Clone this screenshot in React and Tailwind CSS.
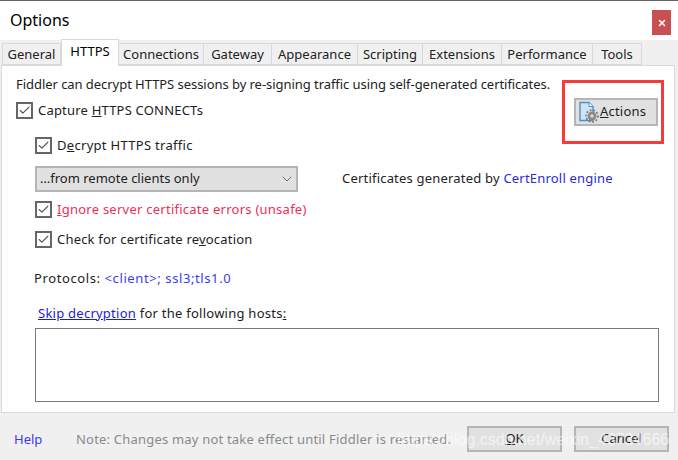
import { Check, ChevronDown, X } from "lucide-react";

const TABS = [
  { label: "General", width: "w-[59px]" },
  { label: "HTTPS", width: "w-[58px]", active: true },
  { label: "Connections", width: "w-[86px]" },
  { label: "Gateway", width: "w-[69px]" },
  { label: "Appearance", width: "w-[87px]" },
  { label: "Scripting", width: "w-[66px]" },
  { label: "Extensions", width: "w-[80px]" },
  { label: "Performance", width: "w-[92px]" },
  { label: "Tools", width: "w-[50px]" },
];

function CheckRow({ className = "", labelClass = "", children }) {
  return (
    <div className={`flex items-center gap-[5px] ${className}`}>
      <span className="flex h-[17px] w-[17px] shrink-0 items-center justify-center border-2 border-[#666] bg-white">
        <Check className="h-[15px] w-[15px] text-[#555]" strokeWidth={2} />
      </span>
      <span className={`-mt-[2px] ${labelClass}`}>{children}</span>
    </div>
  );
}

function ActionsIcon() {
  return (
    <svg width="22" height="22" viewBox="0 0 22 22" className="shrink-0">
      <path d="M2 1.5h9l4 4v14H2z" fill="#cfe3f5" stroke="#4a90c8" strokeWidth="1.4" />
      <path d="M11 1.5v4h4" fill="#fff" stroke="#4a90c8" strokeWidth="1" />
      <circle cx="14" cy="15" r="4.5" fill="#8a8a8a" />
      <circle cx="14" cy="15" r="6" fill="none" stroke="#777" strokeWidth="1.6" strokeDasharray="1.8 1.8" />
      <circle cx="14" cy="15" r="1.8" fill="#d8d8d8" />
    </svg>
  );
}

export default function App() {
  return (
    <div className="relative flex h-[460px] w-[678px] flex-col overflow-hidden bg-white font-['Noto_Sans',sans-serif] text-[13px] text-[#222]">
      <div className="h-px bg-[#666]" />

      <div className="flex h-[39px] items-start justify-between pr-[7px]">
        <div className="pl-[10px] pt-[6px] text-[16px] leading-[26px] text-black">Options</div>
        <button className="mt-[9px] flex h-[25px] w-[19px] items-center justify-center bg-[#c75050] text-white">
          <X className="h-[10px] w-[10px]" strokeWidth={3.5} />
        </button>
      </div>

      <div className="flex h-[25px] items-end bg-[#f0f0f0] pl-[3px]">
        {TABS.map((tab) => (
          <div
            key={tab.label}
            className={`flex items-center justify-center border border-[#d9d9d9] ${tab.width} ${
              tab.active ? "z-10 -mb-px h-[27px] border-b-0 bg-white pb-[3px] text-black" : "-ml-px h-[22px] bg-[#f0f0f0] pt-px"
            }`}
          >
            {tab.label}
          </div>
        ))}
      </div>

      <div className="flex h-[348px] bg-[#f0f0f0] pl-px pr-[3px]">
        <div className="flex w-full flex-col border border-[#d9d9d9] bg-white pl-[14px] pr-[14px]">
          <div className="flex">
            <div className="w-[548px] shrink-0">
              <div className="pt-[9px] leading-[18px] tracking-[-0.05px]">
                Fiddler can decrypt HTTPS sessions by re-signing traffic using self-generated certificates.
              </div>
              <CheckRow className="mt-[9px] leading-[18px] tracking-[0.2px]">
                Capture <u>H</u>TTPS CONNECTs
              </CheckRow>
            </div>
            <button className="mt-[32px] ml-[10px] flex h-[28px] w-[84px] items-center border-2 border-[#b5b5b5] bg-[#e1e1e1] pl-[2px] tracking-[0.2px]">
              <ActionsIcon />
              <span>
                <u>A</u>ctions
              </span>
            </button>
          </div>

          <div className="ml-[19px] flex flex-col">
            <CheckRow className="mt-[11px] leading-[16px] tracking-[0.3px]">
              D<u>e</u>crypt HTTPS traffic
            </CheckRow>
            <div className="mt-[12px] flex items-center">
              <div className="flex h-[26px] w-[263px] items-center justify-between border-2 border-[#b5b5b5] bg-[#e1e1e1] pl-[3px] pr-px">
                <span>…from remote clients only</span>
                <ChevronDown className="h-[16px] w-[16px] text-[#666]" strokeWidth={1.4} />
              </div>
              <div className="ml-[44px] tracking-[0.2px]">
                Certificates generated by <span className="text-[#2a2ae0]">CertEnroll engine</span>
              </div>
            </div>
            <CheckRow className="mt-[9px] leading-[16px] tracking-[0.25px]" labelClass="text-[#e8305a]">
              <u>I</u>gnore server certificate errors (unsafe)
            </CheckRow>
            <CheckRow className="mt-[13px] leading-[16px] tracking-[0.2px]">
              Check for certificate re<u>v</u>ocation
            </CheckRow>
          </div>

          <div className="mt-[21px] ml-[18px] leading-[18px] tracking-[0.6px]">
            Protocols: <span className="text-[#3a3af0]">&lt;client&gt;; ssl3;tls1.0</span>
          </div>
          <div className="mt-[17px] ml-[22px] leading-[18px] tracking-[0.25px]">
            <span className="text-[#1a1ae6] underline">Skip decryption</span> for the following hosts<u>:</u>
          </div>
          <div className="mt-[6px] ml-[19px] h-[74px] w-[624px] border border-[#7a7a7a] bg-white" />
        </div>
      </div>

      <div className="flex flex-1 items-start bg-[#f0f0f0] pl-[14px] pt-[13px]">
        <span className="w-[62px] leading-[26px] text-[#3a3af0]">Help</span>
        <span className="w-[391px] leading-[26px] tracking-[0.2px] text-[#8a8a8a]">
          Note: Changes may not take effect until Fiddler is restarted.
        </span>
        <button className="h-[26px] w-[95px] border-2 border-[#b5b5b5] bg-[#e1e1e1]">
          <u>O</u>K
        </button>
        <button className="ml-[12px] h-[26px] w-[95px] border-2 border-[#b5b5b5] bg-[#e1e1e1]">Cancel</button>
      </div>

      {/* annotation frame and watermark lie over the screenshot */}
      <div className="absolute left-[562px] top-[80px] h-[64px] w-[102px] border-[3px] border-[#f53b3b]" />
      <div className="absolute left-[397px] top-[428px] font-['Liberation_Sans',sans-serif] text-[16px] leading-[24px] text-white/60">
        https://blog.csdn.net/weixin_43734666
      </div>
    </div>
  );
}
